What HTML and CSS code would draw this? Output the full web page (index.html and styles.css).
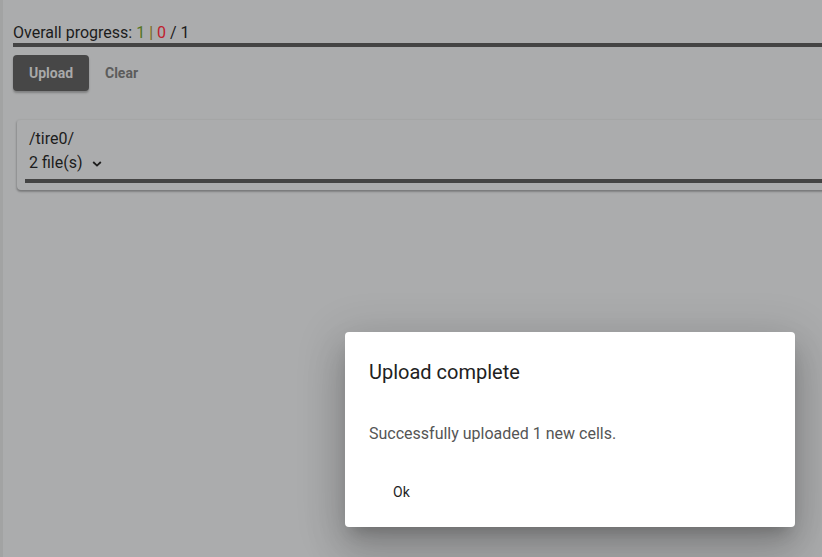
FILE: index.html
```html
<!DOCTYPE html>
<html lang="en">
<head>
    <meta charset="UTF-8">
    <meta name="viewport" content="width=device-width, initial-scale=1.0">
    <link rel="stylesheet" href="styles.css">
    <title>Upload</title>
</head>
<body>
    <div class="page">
        <div class="progress-label">
            Overall progress: <span class="ok">1</span> <span class="sep">|</span> <span class="fail">0</span> / 1
        </div>
        <div class="bar"></div>

        <div class="actions">
            <button class="btn-upload">Upload</button>
            <button class="btn-clear">Clear</button>
        </div>

        <div class="card">
            <div class="card-path">/tire0/</div>
            <div class="card-files">2 file(s)
                <svg class="chevron" width="10" height="8" viewBox="0 0 10 8">
                    <path d="M1.2 2 L5 5.6 L8.8 2" fill="none" stroke="#1c1c1c" stroke-width="1.8"/>
                </svg>
            </div>
            <div class="bar card-bar"></div>
        </div>
    </div>

    <div class="dialog">
        <h2 class="dialog-title">Upload complete</h2>
        <p class="dialog-text">Successfully uploaded 1 new cells.</p>
        <div class="dialog-actions">
            <button class="btn-ok">Ok</button>
        </div>
    </div>
</body>
</html>
```

FILE: styles.css
```css
*{
    box-sizing: border-box;
}

html, body{
    height: 100%;
}

body{
    margin: 0;
    font-family: Roboto, "Liberation Sans", sans-serif;
    background-color: #abacad;
    border-left: 3px solid #a2a3a3;
    overflow: hidden;
    color: #1c1c1c;
}

.page{
    padding: 23px 0 0 10px;
    width: 900px;
}

.progress-label{
    font-size: 16px;
    line-height: 20px;
}

.ok{
    color: #55741f;
}

.sep{
    color: #7a6a1a;
}

.fail{
    color: #c0202c;
}

.bar{
    height: 4px;
    background-color: #444;
}

.actions{
    display: flex;
    align-items: center;
    gap: 16px;
    margin-top: 8px;
}

button{
    font-family: inherit;
    border: none;
    background: none;
    cursor: pointer;
}

.btn-upload{
    width: 76px;
    height: 36px;
    border-radius: 4px;
    background-color: #474747;
    color: #a9a9a9;
    font-size: 14px;
    font-weight: 700;
    box-shadow: 0 2px 2px rgba(0, 0, 0, 0.25);
}

.btn-clear{
    color: #5c5c5c;
    font-size: 14px;
    font-weight: 700;
    padding: 0;
}

.card{
    margin: 28px 0 0 4px;
    padding: 7px 0 7px 8px;
    border-top: 1px solid #a5a6a6;
    border-radius: 4px;
    box-shadow: 0 2px 2px rgba(0, 0, 0, 0.22), -1px 1px 2px rgba(0, 0, 0, 0.12);
}

.card-path, .card-files{
    padding-left: 4px;
    font-size: 16px;
    line-height: 24px;
}

.card-files{
    display: flex;
    align-items: center;
    gap: 9px;
}

.chevron{
    margin-top: 2px;
}

.card-bar{
    margin-top: 4px;
}

.dialog{
    position: absolute;
    left: 345px;
    top: 332px;
    width: 450px;
    height: 195px;
    background-color: #fff;
    border-radius: 4px;
    box-shadow: 0 11px 15px -7px rgba(0, 0, 0, 0.2), 0 24px 38px 3px rgba(0, 0, 0, 0.14), 0 9px 46px 8px rgba(0, 0, 0, 0.12);
    padding: 24px 24px 0 24px;
}

.dialog-title{
    margin: 0;
    font-size: 20px;
    font-weight: 400;
    line-height: 32px;
    color: #212121;
}

.dialog-text{
    margin: 34px 0 0;
    font-size: 16px;
    line-height: 24px;
    color: #555;
}

.dialog-actions{
    margin-top: 28px;
}

.btn-ok{
    font-size: 14px;
    font-weight: 400;
    color: #1f1f1f;
    padding: 0 8px 0 24px;
    height: 36px;
}
```
